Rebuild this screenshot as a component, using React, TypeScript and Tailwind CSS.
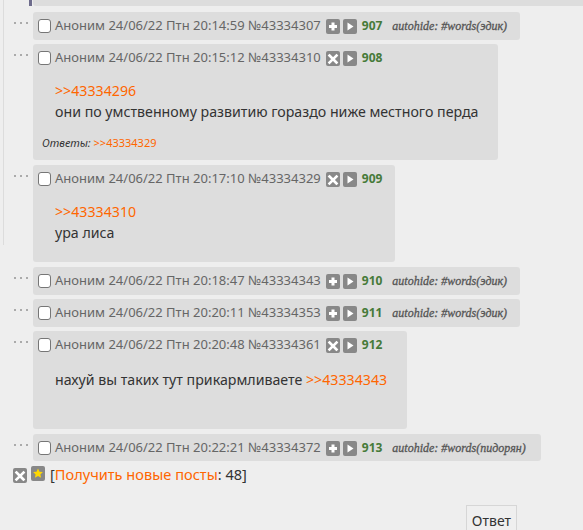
import React from 'react';

const IconBox = ({ kind }: { kind: string }) => {
  return (
    <span className="inline-flex w-[14px] h-[15px] rounded-[2px] bg-[#888] items-center justify-center shrink-0">
      <svg width="14" height="15" viewBox="0 0 14 15">
        {kind === 'plus' && (
          <path d="M5.5 3.5h3v2.5h2.5v3h-2.5v2.5h-3v-2.5h-2.5v-3h2.5z" fill="#fff" />
        )}
        {kind === 'x' && (
          <path d="M3.5 4.5l7 7M10.5 4.5l-7 7" stroke="#fff" strokeWidth="2.6" strokeLinecap="square" />
        )}
        {kind === 'play' && <path d="M4.5 3.5l6 4-6 4z" fill="#fff" />}
        {kind === 'star' && (
          <path
            d="M7 2.5l1.5 3.2 3.4.4-2.5 2.3.7 3.4L7 10.1l-3.1 1.7.7-3.4-2.5-2.3 3.4-.4z"
            fill="#ffd800"
          />
        )}
      </svg>
    </span>
  );
};

const Dots = () => (
  <div className="w-[14px] shrink-0 flex gap-[4px] pt-[10px] mr-[5px]">
    <span className="w-[2px] h-[2px] bg-[#aaa]" />
    <span className="w-[2px] h-[2px] bg-[#aaa]" />
    <span className="w-[2px] h-[2px] bg-[#aaa]" />
  </div>
);

const Header = ({ time, num, n, hidden, tag }: any) => (
  <div className="h-[28px] flex items-center pl-[5px] whitespace-nowrap">
    <span className="w-[13px] h-[14px] rounded-[3px] border border-[#767676] bg-white shrink-0" />
    <span className="ml-[4px] text-[13px] text-[#666]">
      Аноним 24/06/22 Птн {time} №{num}
    </span>
    <span className="ml-[5px] flex gap-[3px]">
      <IconBox kind={hidden ? 'plus' : 'x'} />
      <IconBox kind="play" />
    </span>
    <span className="ml-[5px] text-[12px] font-bold text-[#467a39]">{n}</span>
    {hidden && (
      <span className="ml-[10px] text-[12px] italic text-[#555] font-['Liberation_Serif',serif] [-webkit-text-stroke:0.3px_#555]">
        autohide: {tag}
      </span>
    )}
  </div>
);

const Link = ({ children }: any) => <span className="text-[#ff6600]">{children}</span>;

export default function App() {
  return (
    <div className="relative w-[583px] h-[530px] overflow-hidden bg-[#eeeeee] font-['Noto_Sans',sans-serif]">
      <div className="absolute left-[3px] top-0 h-[245px] w-px bg-[#dcdcdc]" />

      <div className="flex ml-[29px] h-[6px]">
        <div className="w-[3px] bg-[#6e6c8c]" />
        <div className="ml-[1px] flex-1 bg-[#dddddd] rounded-bl-[3px]" />
      </div>

      <div className="flex flex-col pl-[14px] pt-[6px]">
        <div className="flex">
          <Dots />
          <div className="w-[487px] h-[28px] bg-[#dddddd] rounded-[3px]">
            <Header time="20:14:59" num="43334307" n="907" hidden tag="#words(эдик)" />
          </div>
        </div>

        <div className="flex mt-[4px]">
          <Dots />
          <div className="w-[465px] h-[116px] bg-[#dddddd] rounded-[3px]">
            <Header time="20:15:12" num="43334310" n="908" />
            <div className="pl-[22px] pt-[8px] text-[14.2px] leading-[21px] text-[#333]">
              <div>
                <Link>&gt;&gt;43334296</Link>
              </div>
              <div>они по умственному развитию гораздо ниже местного перда</div>
            </div>
            <div className="pl-[9px] mt-[14px] text-[11px] leading-[14px]">
              <span className="italic text-[#333]">Ответы: </span>
              <Link>&gt;&gt;43334329</Link>
            </div>
          </div>
        </div>

        <div className="flex mt-[5px]">
          <Dots />
          <div className="w-[362px] h-[97px] bg-[#dddddd] rounded-[3px]">
            <Header time="20:17:10" num="43334329" n="909" />
            <div className="pl-[22px] pt-[8px] text-[14.2px] leading-[21px] text-[#333]">
              <div>
                <Link>&gt;&gt;43334310</Link>
              </div>
              <div>ура лиса</div>
            </div>
          </div>
        </div>

        <div className="flex mt-[5px]">
          <Dots />
          <div className="w-[487px] h-[28px] bg-[#dddddd] rounded-[3px]">
            <Header time="20:18:47" num="43334343" n="910" hidden tag="#words(эдик)" />
          </div>
        </div>

        <div className="flex mt-[4px]">
          <Dots />
          <div className="w-[487px] h-[28px] bg-[#dddddd] rounded-[3px]">
            <Header time="20:20:11" num="43334353" n="911" hidden tag="#words(эдик)" />
          </div>
        </div>

        <div className="flex mt-[4px]">
          <Dots />
          <div className="w-[374px] h-[98px] bg-[#dddddd] rounded-[3px]">
            <Header time="20:20:48" num="43334361" n="912" />
            <div className="pl-[22px] pt-[10px] text-[14.2px] leading-[21px] text-[#333]">
              нахуй вы таких тут прикармливаете <Link>&gt;&gt;43334343</Link>
            </div>
          </div>
        </div>

        <div className="flex mt-[5px]">
          <Dots />
          <div className="w-[508px] h-[27px] bg-[#dddddd] rounded-[3px]">
            <Header time="20:22:21" num="43334372" n="913" hidden tag="#words(пидорян)" />
          </div>
        </div>
      </div>

      <div className="flex items-center pl-[13px] mt-[4px] h-[20px]">
        <IconBox kind="x" />
        <span className="ml-[4px]">
          <IconBox kind="star" />
        </span>
        <span className="ml-[5px] text-[14.6px] text-[#333]">
          [<Link>Получить новые посты</Link>: 48]
        </span>
      </div>

      <div className="flex justify-end pr-[66px] mt-[20px]">
        <button className="h-[30px] px-[5px] border border-[#d6d6d6] bg-[#efefef] text-[14px] text-[#333]">
          Ответ
        </button>
      </div>
    </div>
  );
}
